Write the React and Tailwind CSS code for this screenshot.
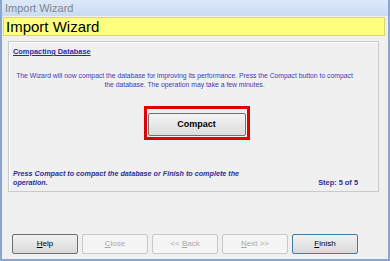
import React from "react";

const WizButton = ({ label, hot, disabled, focused }) => {
  const idx = label.indexOf(hot);
  return (
    <button
      disabled={disabled}
      className={
        "w-[66px] h-[20px] rounded-[2px] text-[8px] leading-none " +
        (disabled
          ? "border border-[#c9c9c9] bg-[#f4f4f4] text-[#a8a8a8]"
          : focused
          ? "border border-[#3c7fb1] bg-gradient-to-b from-[#f2f2f2] to-[#d9d9d9] text-black"
          : "border border-[#707070] bg-gradient-to-b from-[#f2f2f2] to-[#d9d9d9] text-black")
      }
    >
      {label.slice(0, idx)}
      <span className="underline">{hot}</span>
      {label.slice(idx + 1)}
    </button>
  );
};

const App = () => {
  return (
    <div
      className="w-[390px] h-[261px] flex flex-col bg-[#f0f0f0] border-x-2 border-b-2 border-[#8aa5cf] overflow-hidden"
      style={{ fontFamily: '"Liberation Sans", Arial, sans-serif' }}
    >
      <div className="h-[16px] shrink-0 flex items-center px-[3px] bg-gradient-to-b from-[#dde9f8] to-[#c9dbf2] text-[11px] text-[#7d8591]">
        Import Wizard
      </div>
      <div className="mt-[1px] ml-[1px] mr-[3px] h-[19px] shrink-0 flex items-center px-[2px] bg-[#ffff80] border border-[#d6d67a] text-[15px] text-black leading-none">
        Import Wizard
      </div>
      <div className="mt-[5px] ml-[6px] mr-[9px] h-[151px] shrink-0 border border-[#c9c9c9] shadow-[inset_1px_1px_0_#ffffff] flex flex-col px-[4px]">
        <div className="mt-[4px] text-[7.4px] font-bold underline text-[#2b2ba0]">
          Compacting Database
        </div>
        <p className="mt-[14px] pr-[18px] text-center text-[6.8px] leading-[9px] text-[#3b3bb8]">
          The Wizard will now compact the database for improving its performance. Press the Compact button to compact
          <br />
          the database. The operation may take a few minutes.
        </p>
        <div className="mt-[17px] self-center ml-[6px] border-[3px] border-[#e00000] p-[1px]">
          <button className="w-[98px] h-[23px] rounded-[2px] border border-[#707070] bg-gradient-to-b from-[#f4f4f4] to-[#dcdcdc] text-[9px] font-bold text-black">
            Compact
          </button>
        </div>
        <div className="mt-auto mb-[4px] flex items-end justify-between">
          <p className="w-[232px] text-[7.2px] leading-[9px] font-bold italic text-[#2e2ea0]">
            Press Compact to compact the database or Finish to complete the operation.
          </p>
          <div className="mr-[16px] text-[7.4px] leading-[9px] font-bold text-[#2e2ea0]">Step: 5 of 5</div>
        </div>
      </div>
      <div className="mt-[42px] ml-[10px] flex gap-[4px]">
        <WizButton label="Help" hot="H" />
        <WizButton label="Close" hot="C" disabled />
        <WizButton label="<< Back" hot="B" disabled />
        <WizButton label="Next >>" hot="N" disabled />
        <WizButton label="Finish" hot="F" focused />
      </div>
    </div>
  );
};

export default App;
